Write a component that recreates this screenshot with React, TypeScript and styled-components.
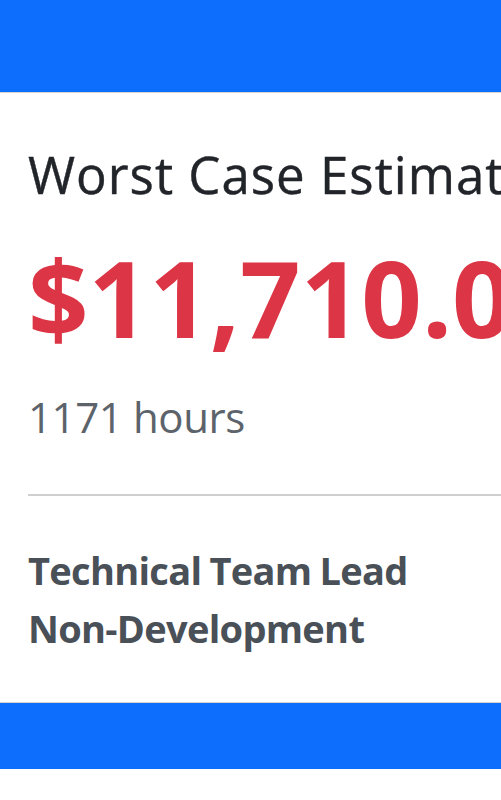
import React from "react";
import styled, { createGlobalStyle } from "styled-components";

const Global = createGlobalStyle`
  html, body { margin: 0; padding: 0; background: #fff; overflow: hidden; }
  body { font-family: "Open Sans", "Noto Sans", sans-serif; }
`;

const Page = styled.div`
  width: 501px;
  height: 800px;
  display: flex;
  flex-direction: column;
  overflow: hidden;
`;

const Bar = styled.div<{ $h: number; $edge: "top" | "bottom" }>`
  flex: none;
  height: ${(p) => p.$h}px;
  background: #0d6efd;
  ${(p) =>
    p.$edge === "bottom"
      ? "border-bottom: 1px solid #d8d4cf;"
      : "border-top: 1px solid #d8d4cf;"}
`;

const Body = styled.div`
  flex: none;
  padding: 51px 0 45px 28px;
  display: flex;
  flex-direction: column;
  white-space: nowrap;
`;

const Title = styled.h2`
  margin: 0;
  font-size: 51px;
  line-height: 60px;
  font-weight: 400;
  letter-spacing: 1px;
  color: #212529;
  -webkit-text-stroke: 0.4px #212529;
`;

const Amount = styled.div`
  margin-top: 30px;
  font-size: 106px;
  line-height: 127px;
  font-weight: 700;
  color: #dc3545;
`;

const Hours = styled.div`
  margin-top: 26px;
  font-size: 42px;
  line-height: 60px;
  letter-spacing: -0.4px;
  color: #5c636a;
`;

const Divider = styled.hr`
  margin: 47px 0 45px;
  border: 0;
  border-top: 2px solid #cfcfcf;
  width: 100%;
`;

const Role = styled.div`
  font-size: 38px;
  line-height: 58px;
  font-weight: 700;
  letter-spacing: -0.7px;
  word-spacing: -1px;
  color: #495057;
`;

export default function App() {
  return (
    <>
      <Global />
      <Page>
        <Bar $h={92} $edge="bottom" />
        <Body>
          <Title>Worst Case Estimate</Title>
          <Amount>$11,710.00</Amount>
          <Hours>1171 hours</Hours>
          <Divider />
          <Role>Technical Team Lead</Role>
          <Role>Non-Development</Role>
        </Body>
        <Bar $h={66} $edge="top" />
      </Page>
    </>
  );
}
